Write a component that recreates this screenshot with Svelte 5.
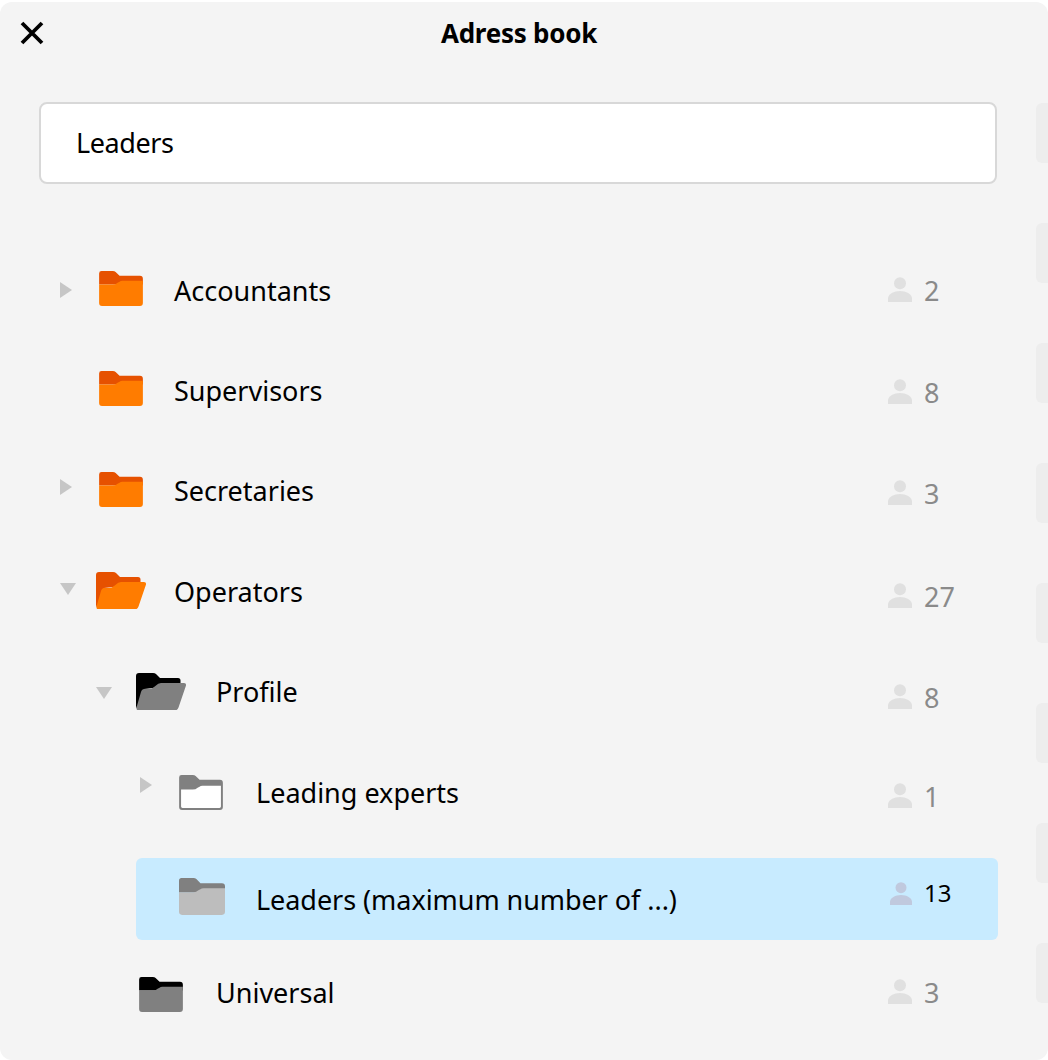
<script>
  const orange = ['#e65100', '#ff7c00'];
  const black = ['#000000', '#808080'];
  const rows = [
    { name: 'Accountants', count: 2, arrow: 'right', folder: 'closed', c: orange, text: 174, fx: 99, fy: 30, ax: 60, ay: 41, cn: -2 },
    { name: 'Supervisors', count: 8, folder: 'closed', c: orange, text: 174, fx: 99, fy: 30, cn: 1 },
    { name: 'Secretaries', count: 3, arrow: 'right', folder: 'closed', c: orange, text: 174, fx: 99, fy: 30, ax: 60, ay: 37, cn: 3 },
    { name: 'Operators', count: 27, arrow: 'down', folder: 'open', c: orange, text: 174, fx: 96, fy: 30, ax: 60, ay: 41, cn: 8 },
    { name: 'Profile', count: 8, arrow: 'down', folder: 'open', c: black, text: 216, fx: 136, fy: 30, ax: 96, ay: 44, cn: 10 },
    { name: 'Leading experts', count: 1, arrow: 'right', folder: 'outline', c: ['#808080', '#ffffff'], text: 256, fx: 179, fy: 32, ax: 140, ay: 34, cn: 7 }
  ];
  const strips = [0, 1, 2, 3, 4, 5, 6, 7];
</script>

{#snippet folderIcon(kind, c)}
  {#if kind === 'open'}
    <svg width="51" height="37" viewBox="0 0 51 37">
      <path d="M0 3a3 3 0 0 1 3-3h14q2 0 3 1l4 4h18a2.500 2.500 0 0 1 2.500 2.500V12L8 16 2 36Q0 35 0 33z" fill={c[0]} />
      <path d="M5 19q.8-3 3.500-3H13q3 0 5-2l2-1.500q2-2.500 5-2.500h23q2.500 0 2 2.500l-7.500 22q-1 3-4 3H3q-3 0-2.500-3z" fill={c[1]} />
    </svg>
  {:else if kind === 'outline'}
    <svg width="44" height="35" viewBox="0 0 45 36">
      <path d="M0 2.500Q0 0 2.500 0H14q2 0 3 1l4 4h21a3 3 0 0 1 3 3v25a3 3 0 0 1-3 3H3a3 3 0 0 1-3-3z" fill={c[0]} />
      <path d="M2 15h12q3 0 5-2l2-1q1-1 3-1h19v21.500q0 1.500-1.500 1.500h-38q-1.500 0-1.500-1.500z" fill={c[1]} />
    </svg>
  {:else}
    <svg width={kind === 'wide' ? 46 : 44} height={kind === 'wide' ? 37 : 35} viewBox="0 0 45 36">
      <path d="M0 2.500Q0 0 2.500 0H14q2 0 3 1l4 4h21a3 3 0 0 1 3 3v6H0z" fill={c[0]} />
      <path d="M0 14h14q3 0 5-2l2-1q1-1 3-1h21v23a3 3 0 0 1-3 3H3a3 3 0 0 1-3-3z" fill={c[1]} />
    </svg>
  {/if}
{/snippet}

{#snippet person(color, size)}
  <svg class="person" width={size} height={size + 1} viewBox="0 0 24 25">
    <circle cx="12" cy="6.200" r="6" fill={color} />
    <path d="M0 25v-3.500C0 17 6 14 12 14s12 3 12 7.500V25z" fill={color} />
  </svg>
{/snippet}

<div class="panel">
  <header class="head">
    <button class="close" aria-label="Close">
      <svg width="26" height="26" viewBox="0 0 26 26"><path d="M3 3 23 23M23 3 3 23" stroke="#000" stroke-width="3.800" fill="none" /></svg>
    </button>
    <h1>Adress book</h1>
  </header>

  <div class="search">Leaders</div>

  <ul class="tree">
    {#each rows as r}
      <li class="row">
        {#if r.arrow === 'right'}
          <span class="arrow right" style="left:{r.ax}px;top:{r.ay}px"></span>
        {:else if r.arrow === 'down'}
          <span class="arrow down" style="left:{r.ax}px;top:{r.ay}px"></span>
        {/if}
        <span class="icon" style="left:{r.fx}px;top:{r.fy}px">{@render folderIcon(r.folder, r.c)}</span>
        <span class="name" style="margin-left:{r.text}px">{r.name}</span>
        <span class="count" style="margin-top:{r.cn}px">{@render person('#e0e0e0', 24)}<b>{r.count}</b></span>
      </li>
    {/each}

    <li class="row selected-wrap">
      <div class="selected">
        <span class="icon sel-icon">{@render folderIcon('wide', ['#808080', '#bdbdbd'])}</span>
        <span class="sel-name">Leaders (maximum number of ...)</span>
        <span class="sel-count">{@render person('#c0c9de', 22)}<b>13</b></span>
      </div>
    </li>

    <li class="row last">
      <span class="icon" style="left:139px;top:29px">{@render folderIcon('closed', black)}</span>
      <span class="name" style="margin-left:216px">Universal</span>
      <span class="count" style="margin-top:-2px">{@render person('#e0e0e0', 24)}<b>3</b></span>
    </li>
  </ul>

  <div class="strips" aria-hidden="true">
    {#each strips as s}<i></i>{/each}
  </div>
</div>

<style>
  :global(body) { margin: 0; background: #fff; }
  .panel {
    position: relative;
    width: 1048px;
    height: 1058px;
    margin-top: 2px;
    background: #f4f4f4;
    border-radius: 12px;
    overflow: hidden;
    font-family: "Noto Sans", "Open Sans", sans-serif;
    color: #000;
  }
  .head {
    height: 62px;
    display: flex;
    align-items: center;
    justify-content: center;
    position: relative;
  }
  .close {
    position: absolute;
    left: 19px;
    top: 18px;
    padding: 0;
    border: 0;
    background: none;
    line-height: 0;
  }
  h1 {
    margin: 0 10px 0 0;
    font-size: 26px;
    line-height: 62px;
    font-weight: 700;
    letter-spacing: -0.25px;
  }
  .search {
    box-sizing: border-box;
    width: 958px;
    height: 82px;
    margin: 38px 0 0 39px;
    padding-left: 35px;
    border: 2px solid #d8d8d8;
    border-radius: 8px;
    background: #fff;
    font-size: 27px;
    letter-spacing: -0.4px;
    line-height: 78px;
  }
  .tree {
    list-style: none;
    margin: 57px 0 0;
    padding: 0;
  }
  .row {
    position: relative;
    display: flex;
    align-items: center;
    height: 100.400px;
    font-size: 27px;
  }
  .name { margin-bottom: 2px; }
  .icon { position: absolute; line-height: 0; }
  .arrow { position: absolute; width: 0; height: 0; }
  .arrow.right {
    border-left: 12px solid #c6c6c6;
    border-top: 8px solid transparent;
    border-bottom: 8px solid transparent;
  }
  .arrow.down {
    border-top: 12px solid #c6c6c6;
    border-left: 8px solid transparent;
    border-right: 8px solid transparent;
  }
  .count {
    margin-left: auto;
    margin-right: 108px;
    width: 52px;
    display: flex;
    align-items: center;
    gap: 12px;
    color: #8a8a8a;
    font-size: 27px;
  }
  .count b, .sel-count b { font-weight: 400; }
  .person { flex: none; }
  .count .person { margin-bottom: 2px; }
  .selected-wrap { height: 82px; margin-top: 15px; align-items: flex-start; }
  .selected {
    box-sizing: border-box;
    position: relative;
    display: flex;
    margin-left: 136px;
    width: 862px;
    height: 82px;
    background: #c8ebff;
    border-radius: 6px;
  }
  .sel-icon { left: 43px; top: 20px; }
  .sel-name { margin: 21px 0 0 120px; line-height: 42px; letter-spacing: -0.05px; }
  .sel-count {
    position: absolute;
    left: 754px;
    top: 21px;
    display: flex;
    align-items: flex-start;
    gap: 12px;
    font-size: 24px;
    line-height: 28px;
  }
  .sel-count .person { margin-top: 3px; }
  .last { height: 90px; margin-top: 8px; }
  .strips {
    position: absolute;
    right: 0;
    top: 101px;
    display: flex;
    flex-direction: column;
    gap: 60px;
  }
  .strips i {
    display: block;
    width: 12px;
    height: 60px;
    background: #ededed;
    border-radius: 6px 0 0 6px;
  }
</style>
